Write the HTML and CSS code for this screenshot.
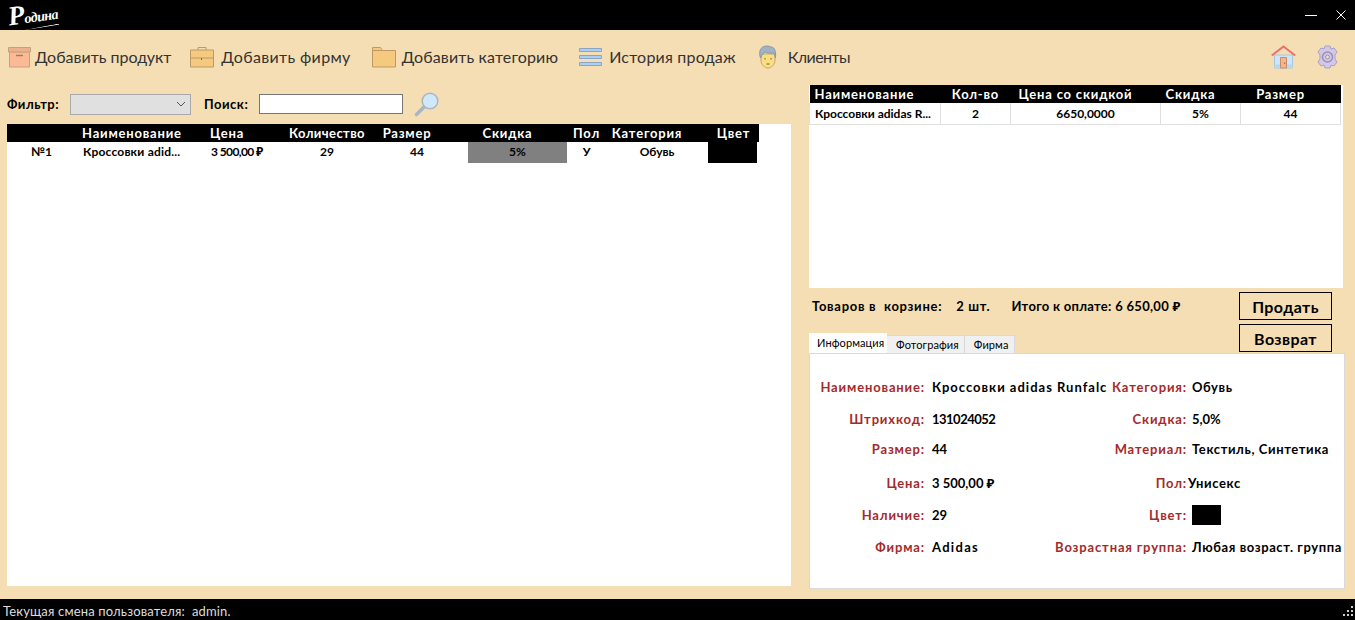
FILE: index.html

```html
<!DOCTYPE html>
<html lang="ru">
<head>
  <meta charset="UTF-8" />
  <title>Родина</title>
  <link rel="stylesheet" href="styles.css">
</head>
<body>
  <header class="titlebar">
    <div class="logo">Родина</div>
    <div class="win-buttons">
      <svg width="12" height="12" viewBox="0 0 12 12"><path d="M0 6.500h12" stroke="#fff" fill="none"/></svg>
      <svg width="12" height="12" viewBox="0 0 12 12"><path d="M1.500 1.500l9 9M10.500 1.500l-9 9" stroke="#fff" fill="none"/></svg>
    </div>
  </header>

  <nav class="toolbar">
    <a class="tool tool-product">
      <svg width="23" height="22" viewBox="0 0 23 22"><path d="M1.500 6h20v15h-20z" fill="#fbb996" stroke="#c9a07c"/><path d="M.5 1.500h22V6H.5z" fill="#ecb28e" stroke="#c9a07c"/><path d="M8 9.500h7" stroke="#a8795c" stroke-width="1.500"/></svg>
      Добавить продукт
    </a>
    <a class="tool tool-firm">
      <svg width="24" height="22" viewBox="0 0 24 22"><path d="M8 4V1.500h8V4" fill="none" stroke="#bb9a68"/><path d="M.5 4h23v17H.5z" fill="#f5ca7f" stroke="#bb9a68"/><path d="M.5 12h23" stroke="#bb9a68"/><path d="M11.500 12v2" stroke="#7d6a48"/></svg>
      Добавить фирму
    </a>
    <a class="tool tool-category">
      <svg width="24" height="22" viewBox="0 0 24 22"><path d="M.5 21V1.500h8l2 3h13V21z" fill="#f5ca7f" stroke="#bb9a68"/><path d="M.5 4.500h10" stroke="#bb9a68"/></svg>
      Добавить категорию
    </a>
    <a class="tool tool-history">
      <svg width="23" height="20" viewBox="0 0 23 20"><g fill="#a9d0f2" stroke="#8ba6c4"><path d="M.5 1.500h22v3H.5z"/><path d="M.5 8.500h22v3H.5z"/><path d="M.5 15.500h22v3H.5z"/></g></svg>
      История продаж
    </a>
    <a class="tool tool-clients">
      <svg width="20" height="24" viewBox="0 0 20 24"><path d="M3 9v6c0 5 4 8 7 8s7-3 7-8V9z" fill="#fbdf82" stroke="#c2a768"/><path d="M2.500 13C.5 7 2 1 9 1c2 0 3 .5 4 1 4 0 5 5 4.500 11L16 8c-4 .5-7 0-9-1-2 1-3 3-4.500 6z" fill="#a3b1c4" stroke="#8797ad"/><path d="M7 13v1.500M13 13v1.500M8.500 19h3" stroke="#6e5d38"/></svg>
      Клиенты
    </a>
    <div class="tool-right">
      <svg width="25" height="24" viewBox="0 0 25 24"><path d="M3.500 10h18v13h-18z" fill="#cbe6fb" stroke="#a9c6dc"/><path d="M3.500 19.500h18V23h-18z" fill="#b5d8f3"/><path d="M.8 10.500L12.500 1.500l11.700 9" fill="none" stroke="#e8716f" stroke-width="2"/><path d="M9.500 12.500h6V23h-6z" fill="#f9b48a" stroke="#c98c66"/><path d="M13.800 17.500v1.500" stroke="#8a5f44"/></svg>
      <svg width="23" height="24" viewBox="0 0 23 24"><path d="M9 1h5l1 3 3-1 3 4-2 3v4l2 3-3 4-3-1-1 3H9l-1-3-3 1-3-4 2-3v-4L2 7l3-4 3 1z" fill="#d3c9e6" stroke="#aa9fc8"/><circle cx="11.500" cy="12" r="5" fill="#d3c9e6" stroke="#9a8fba" stroke-width="1.500"/><circle cx="11.500" cy="12" r="2" fill="#f5deb3" stroke="#9a8fba"/></svg>
    </div>
  </nav>

  <main class="content">
    <section class="left">
      <div class="filters">
        <span class="filter-label">Фильтр:</span>
        <div class="select">
          <svg width="10" height="6" viewBox="0 0 10 6"><path d="M1 1l4 4 4-4" fill="none" stroke="#555"/></svg>
        </div>
        <span class="filter-label search-label">Поиск:</span>
        <input type="text" class="search" />
        <svg class="search-icon" width="26" height="25" viewBox="0 0 26 25"><path d="M10 15l-7.500 7.500" stroke="#a9b6c0" stroke-width="3.500" stroke-linecap="round"/><circle cx="16" cy="9" r="7.800" fill="#cfe8fb" stroke="#a9b6c0" stroke-width="1.500"/></svg>
      </div>

      <div class="products">
        <table class="grid products-grid">
          <colgroup>
            <col class="c69"><col class="c128"><col class="c78"><col class="c90"><col class="c96"><col class="c99"><col class="c39"><col class="c102"><col class="c51">
          </colgroup>
          <thead>
            <tr>
              <th></th>
              <th class="pad-name">Наименование</th>
              <th class="pad-price">Цена</th>
              <th class="head-tight">Количество</th>
              <th class="shift-26">Размер</th>
              <th class="shift-20">Скидка</th>
              <th>Пол</th>
              <th class="shift-20">Категория</th>
              <th>Цвет</th>
            </tr>
          </thead>
          <tbody>
            <tr>
              <td>№1</td>
              <td class="pad-name name-cell">Кроссовки adid...</td>
              <td class="pad-price price-cell">3 500,00 ₽</td>
              <td>29</td>
              <td class="shift-6">44</td>
              <td class="discount">5%</td>
              <td>У</td>
              <td>Обувь</td>
              <td class="color-cell"><div class="swatch-fill"></div></td>
            </tr>
          </tbody>
        </table>
      </div>
    </section>

    <section class="right">
      <div class="cart">
        <table class="grid cart-grid">
          <colgroup>
            <col class="c131"><col class="c70"><col class="c150"><col class="c80"><col class="c100">
          </colgroup>
          <thead>
            <tr>
              <th class="cart-name">Наименование</th>
              <th>Кол-во</th>
              <th class="shift-20">Цена со скидкой</th>
              <th class="shift-20">Скидка</th>
              <th class="shift-20">Размер</th>
            </tr>
          </thead>
          <tbody>
            <tr>
              <td class="cart-name">Кроссовки adidas R...</td>
              <td>2</td>
              <td>6650,0000</td>
              <td>5%</td>
              <td>44</td>
            </tr>
          </tbody>
        </table>
      </div>

      <div class="cart-summary">
        <div class="totals">
          <span class="total-count">Товаров в&nbsp; корзине:</span>
          <span class="total-pcs">2 шт.</span>
          <span class="total-sum">Итого к оплате: 6 650,00 ₽</span>
        </div>
        <div class="actions">
          <button>Продать</button>
          <button>Возврат</button>
        </div>
      </div>

      <div class="tabs">
        <div class="tab active">Информация</div>
        <div class="tab">Фотография</div>
        <div class="tab">Фирма</div>
      </div>
      <div class="tab-panel">
        <div class="info-row">
          <span class="label">Наименование:</span><span class="value clip wide-name">Кроссовки adidas Runfalc</span>
          <span class="label label2">Категория:</span><span class="value">Обувь</span>
        </div>
        <div class="info-row">
          <span class="label">Штрихкод:</span><span class="value clip barcode">131024052</span>
          <span class="label label2">Скидка:</span><span class="value num">5,0%</span>
        </div>
        <div class="info-row info-row-up">
          <span class="label">Размер:</span><span class="value clip num">44</span>
          <span class="label label2">Материал:</span><span class="value">Текстиль, Синтетика</span>
        </div>
        <div class="info-row">
          <span class="label">Цена:</span><span class="value clip num">3 500,00 ₽</span>
          <span class="label label2">Пол:</span><span class="value value-tight">Унисекс</span>
        </div>
        <div class="info-row">
          <span class="label">Наличие:</span><span class="value clip num">29</span>
          <span class="label label2">Цвет:</span><span class="value"><div class="color-box"></div></span>
        </div>
        <div class="info-row">
          <span class="label">Фирма:</span><span class="value clip wide">Adidas</span>
          <span class="label label2">Возрастная группа:</span><span class="value">Любая возраст. группа</span>
        </div>
      </div>
    </section>
  </main>

  <footer class="statusbar">
    <span>Текущая смена пользователя:&nbsp; admin.</span>
    <svg width="10" height="10" viewBox="0 0 10 10"><g fill="#ccc"><path d="M8 0h2v2H8zM4 4h2v2H4zM8 4h2v2H8zM0 8h2v2H0zM4 8h2v2H4zM8 8h2v2H8z"/></g></svg>
  </footer>
</body>
</html>
```

FILE: styles.css

```css
* {
  box-sizing: border-box;
}

body {
  font-family: Lato, "Noto Sans", sans-serif;
  background-color: #f5deb3;
  color: #000;
  margin: 0;
  height: 100vh;
  display: flex;
  flex-direction: column;
  overflow: hidden;
}

.titlebar {
  background-color: #000;
  height: 30px;
  display: flex;
  justify-content: space-between;
  align-items: center;
  padding: 0 8px;
}

.logo {
  position: relative;
  color: #fff;
  font-family: "Liberation Serif", serif;
  font-style: italic;
  font-weight: bold;
  font-size: 14px;
  letter-spacing: -.5px;
  line-height: 18px;
  transform: rotate(-8deg);
}

.logo::first-letter {
  font-size: 27px;
}

/* росчерк под словом */
.logo::after {
  content: "";
  position: absolute;
  left: 10px;
  right: 0;
  bottom: -2px;
  height: 2px;
  background-color: #fff;
  clip-path: polygon(0 100%, 100% 0, 100% 50%);
}

.win-buttons {
  display: flex;
  gap: 18px;
  align-items: center;
}

.toolbar {
  height: 54px;
  display: flex;
  align-items: center;
  padding-left: 8px;
  padding-right: 16px;
}

.tool {
  display: flex;
  align-items: center;
  gap: 4px;
  font-size: 16px;
  color: #333;
  white-space: nowrap;
  line-height: 20px;
}

.tool-firm { margin-left: 19px; gap: 7px; letter-spacing: .35px; }
.tool-category { margin-left: 21px; gap: 6px; letter-spacing: .15px; }
.tool-history { margin-left: 21px; gap: 7px; letter-spacing: .2px; }
.tool-clients { margin-left: 22px; gap: 10px; letter-spacing: -.6px; }

.tool-right {
  margin-left: auto;
  display: flex;
  gap: 20px;
  align-items: center;
}

.content {
  flex: 1;
  display: flex;
  min-height: 0;
  padding-left: 7px;
}

.left {
  width: 784px;
  display: flex;
  flex-direction: column;
  padding-bottom: 13px;
}

.filters {
  height: 40px;
  display: flex;
  align-items: center;
}

.filter-label {
  font-weight: bold;
  font-size: 13px;
  letter-spacing: .5px;
}

.select {
  margin-left: 11px;
  width: 121px;
  height: 21px;
  background-color: #e0e0e0;
  border: 1px solid #a9a9a9;
  display: flex;
  align-items: center;
  justify-content: flex-end;
  padding-right: 4px;
}

.search-label {
  margin-left: 13px;
}

.search {
  margin-left: 11px;
  width: 144px;
  height: 20px;
  border: 1px solid #767676;
  background: #fff;
  padding: 0;
}

.search-icon {
  margin-left: 11px;
}

.products {
  flex: 1;
  background-color: #fff;
}

.grid {
  border-collapse: collapse;
  table-layout: fixed;
  font-weight: bold;
}

.grid th {
  background-color: #000;
  color: #fff;
  font-size: 13px;
  letter-spacing: .8px;
  height: 18px;
  padding: 0;
  text-align: center;
  white-space: nowrap;
}

.grid td {
  font-size: 12px;
  height: 21px;
  padding: 0;
  text-align: center;
  white-space: nowrap;
  overflow: hidden;
}

.products-grid {
  width: 752px;
}

.products-grid td {
  padding-bottom: 2px;
}

.c69 { width: 69px; }
.c128 { width: 128px; }
.c78 { width: 78px; }
.c90 { width: 90px; }
.c96 { width: 96px; }
.c99 { width: 99px; }
.c39 { width: 39px; }
.c102 { width: 102px; }
.c51 { width: 51px; }
.c131 { width: 131px; }
.c70 { width: 70px; }
.c150 { width: 150px; }
.c80 { width: 80px; }
.c100 { width: 100px; }

.grid .pad-name,
.grid .pad-price {
  text-align: left;
  padding-left: 6px;
}

.grid .name-cell {
  padding-left: 7px;
  letter-spacing: .2px;
}

.grid .price-cell {
  padding-left: 7px;
  letter-spacing: -.6px;
}

.grid .head-tight { letter-spacing: .4px; }
.grid .shift-26 { padding-right: 26px; }
.grid .shift-20 { padding-right: 20px; }
.grid .shift-6 { padding-right: 6px; }

.grid .discount {
  background-color: #808080;
}

.grid .color-cell {
  vertical-align: top;
  padding-bottom: 0;
}

.swatch-fill {
  background-color: #000;
  width: 49px;
  height: 21px;
}

.right {
  margin-left: 18px;
  width: 536px;
  display: flex;
  flex-direction: column;
}

.cart {
  background-color: #fff;
  height: 203px;
  margin-top: 1px;
  margin-right: 2px;
}

.cart-grid {
  width: 531px;
}

.cart-grid td {
  border: 1px solid #e0e0e0;
  border-top: 0;
}

.grid .cart-name {
  text-align: left;
  padding-left: 5px;
}

.cart-summary {
  display: flex;
  justify-content: space-between;
  height: 46px;
  padding-top: 4px;
}

.totals {
  display: flex;
  font-weight: bold;
  font-size: 13px;
  letter-spacing: .7px;
  height: 28px;
  align-items: center;
  padding-left: 3px;
}

.total-pcs { margin-left: 14px; }
.total-sum { margin-left: 21px; letter-spacing: .3px; }

.actions {
  display: flex;
  flex-direction: column;
  gap: 4px;
  margin-right: 13px;
}

.actions button {
  flex-shrink: 0;
  width: 93px;
  height: 28px;
  background: transparent;
  border: 1px solid #000;
  font-family: inherit;
  font-weight: bold;
  font-size: 16px;
  letter-spacing: .4px;
  padding: 0;
  color: #000;
}

.tabs {
  display: flex;
  height: 19px;
  align-items: flex-end;
}

.tab {
  height: 18px;
  background-color: #f0f0f0;
  border: 1px solid #d9d9d9;
  border-left: 0;
  border-bottom: 0;
  font-size: 11px;
  letter-spacing: .1px;
  line-height: 18px;
  padding: 0 5px 0 9px;
}

.tab.active {
  width: 78px;
  height: 20px;
  background-color: #fff;
  border: 0;
  padding: 0 0 0 8px;
  line-height: 19px;
}

.tab-panel {
  width: 536px;
  height: 236px;
  background-color: #fff;
  border: 1px solid #d9d9d9;
  overflow: hidden;
  padding-top: 17px;
}

.info-row {
  display: flex;
  height: 32px;
  align-items: center;
  font-size: 13px;
  font-weight: bold;
  white-space: nowrap;
  letter-spacing: .6px;
}

.info-row-up {
  margin-top: -2px;
  margin-bottom: 2px;
}

.label {
  color: #a52a2a;
  width: 115px;
  display: flex;
  justify-content: flex-end;
  letter-spacing: .85px;
}

.label2 {
  width: 77px;
}

.value {
  padding-left: 5px;
}

.value.clip {
  width: 185px;
  padding-left: 7px;
  overflow: hidden;
}

.value.wide-name {
  letter-spacing: 1px;
}

.value.num {
  letter-spacing: 0;
}

.value.barcode {
  letter-spacing: -.5px;
}

.value.wide {
  letter-spacing: 1.300px;
}

.value-tight {
  padding-left: 1px;
}

.color-box {
  width: 29px;
  height: 20px;
  background-color: #000;
}

.statusbar {
  background-color: #000;
  color: #ddd;
  height: 21px;
  flex-shrink: 0;
  display: flex;
  justify-content: space-between;
  align-items: center;
  font-size: 13px;
  letter-spacing: .15px;
  padding: 2px 2px 0 3px;
}
```
